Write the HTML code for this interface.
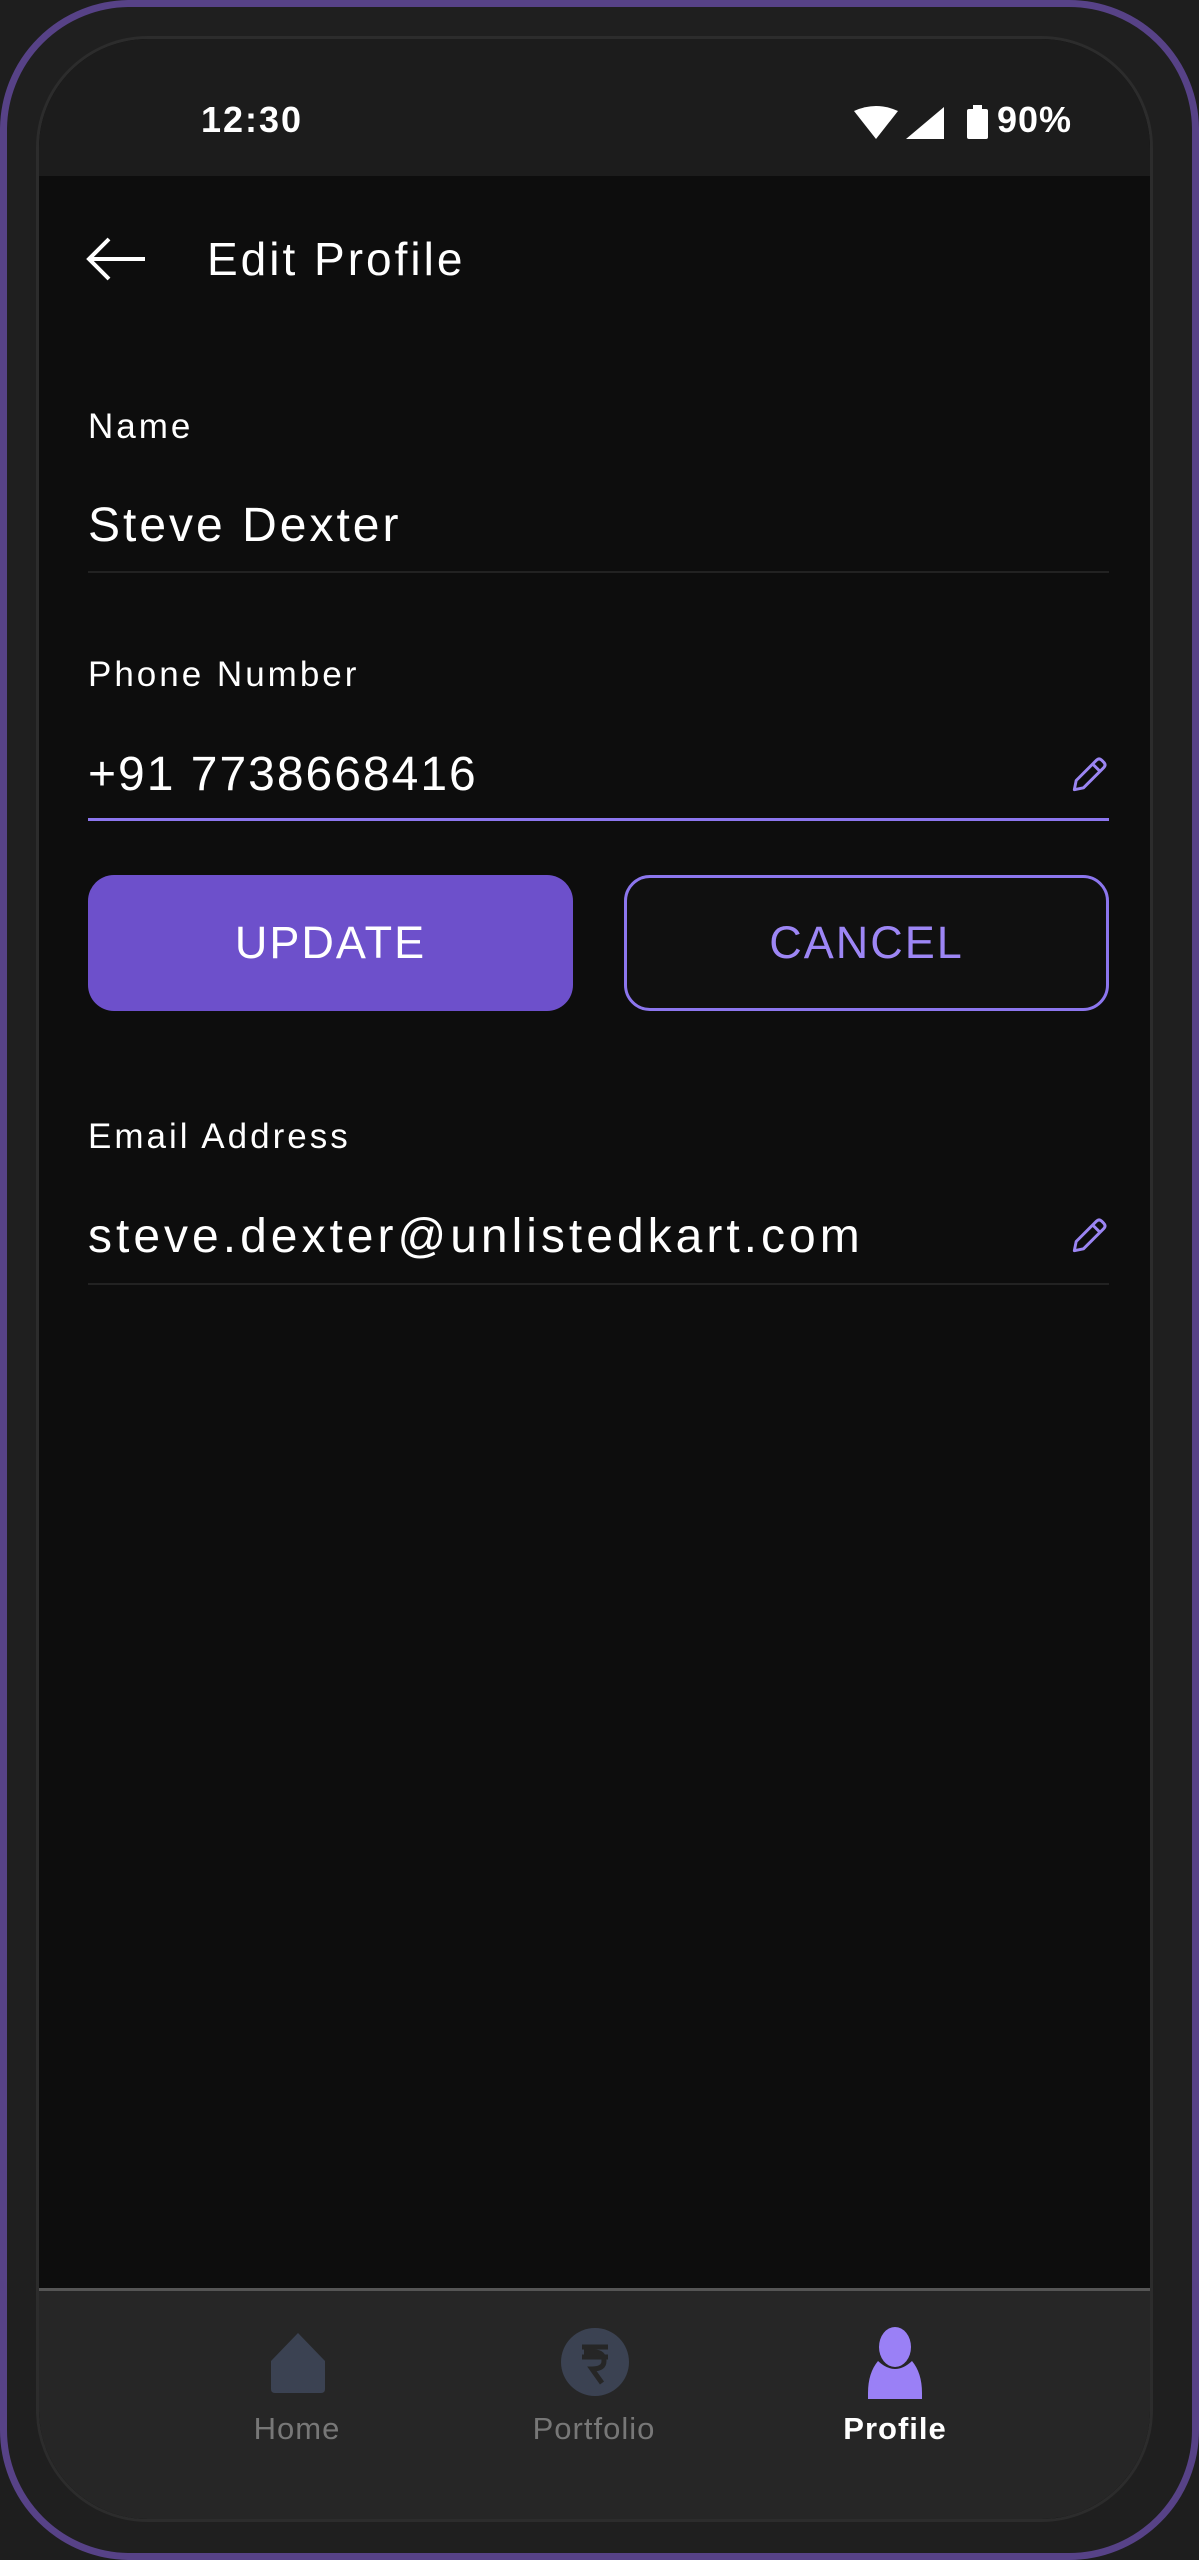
<!DOCTYPE html>
<html><head><meta charset="utf-8"><style>
*{margin:0;padding:0;box-sizing:border-box}
html,body{width:1199px;height:2560px;background:#1e1e1e;overflow:hidden;font-family:"Liberation Sans",sans-serif}
.frame{position:absolute;left:0;top:0;width:1199px;height:2560px;border-radius:130px;background:#1f1f1f;border:7px solid #574287}
.screen{position:absolute;left:36px;top:36px;width:1117px;height:2486px;border-radius:112px;overflow:hidden;background:#0d0d0d;border:3px solid #2c2c2c}
.status{position:absolute;left:0;top:0;width:100%;height:137px;background:#1c1c1c}
.abs{position:absolute;color:#fff;white-space:nowrap}
.line{position:absolute;left:49px;width:1021px;height:2px;background:#222}
.btn{position:absolute;top:836px;height:136px;width:485px;border-radius:26px;display:flex;align-items:center;justify-content:center;font-size:45px;letter-spacing:2px}
.nav{position:absolute;left:0;top:2249px;width:100%;height:240px;background:#262626;border-top:3px solid #555}
.lbl{position:absolute;top:120px;font-size:31px;transform:translateX(-50%);letter-spacing:1px}
.lab{font-size:35px;letter-spacing:3px}
.val{font-size:48px;letter-spacing:3px}
</style></head><body>
<div class="frame"></div>
<div class="screen">
 <div class="status">
  <div class="abs" style="left:162px;top:60px;font-size:36px;font-weight:bold;letter-spacing:2px">12:30</div>
  <svg class="abs" style="left:815px;top:66px" width="140" height="40" viewBox="0 0 140 40">
   <path d="M0 6 Q22 -4 44 6 L22 34 Z" fill="#fff"/>
   <path d="M52 34 L90 2 L90 34 Z" fill="#fff"/>
   <rect x="113" y="4" width="21" height="30" rx="2" fill="#fff"/><rect x="119" y="0" width="9" height="5" fill="#fff"/>
  </svg>
  <div class="abs" style="left:958px;top:60px;font-size:36px;font-weight:bold;letter-spacing:1px">90%</div>
 </div>
 <svg class="abs" style="left:46px;top:196px" width="62" height="48" viewBox="0 0 62 48"><path d="M60 24 H4 M24 4 L4 24 L24 44" stroke="#fff" stroke-width="4" fill="none"/></svg>
 <div class="abs" style="left:168px;top:193px;font-size:46px;letter-spacing:3px">Edit Profile</div>

 <div class="abs lab" style="left:49px;top:368px">Name</div>
 <div class="abs val" style="left:49px;top:459px">Steve Dexter</div>
 <div class="line" style="top:532px"></div>

 <div class="abs lab" style="left:49px;top:616px">Phone Number</div>
 <div class="abs val" style="left:49px;top:708px;letter-spacing:2px">+91 7738668416</div>
 <svg class="abs" style="left:1028px;top:714px" width="44" height="44" viewBox="0 0 24 24"><path d="M4 20 L5 15 L16 4 Q17.5 2.5 19 4 L20 5 Q21.5 6.5 20 8 L9 19 Z M14 6 L18 10" stroke="#9b85f3" stroke-width="1.6" fill="none" stroke-linejoin="round"/></svg>
 <div class="line" style="top:779px;height:3px;background:#8c76ee"></div>

 <div class="btn" style="left:49px;background:#6d50cb;color:#fff">UPDATE</div>
 <div class="btn" style="left:585px;border:3px solid #8c76ee;color:#9d86f5;background:#101010">CANCEL</div>

 <div class="abs lab" style="left:49px;top:1078px">Email Address</div>
 <div class="abs val" style="left:49px;top:1170px;letter-spacing:4px">steve.dexter@unlistedkart.com</div>
 <svg class="abs" style="left:1028px;top:1175px" width="44" height="44" viewBox="0 0 24 24"><path d="M4 20 L5 15 L16 4 Q17.5 2.5 19 4 L20 5 Q21.5 6.5 20 8 L9 19 Z M14 6 L18 10" stroke="#9b85f3" stroke-width="1.6" fill="none" stroke-linejoin="round"/></svg>
 <div class="line" style="top:1244px"></div>

 <div class="nav">
  <svg class="abs" style="left:230px;top:40px" width="58" height="62" viewBox="0 0 58 62"><path d="M29 2 L56 30 V58 Q56 62 52 62 H6 Q2 62 2 58 V30 Z" fill="#3b4252"/></svg>
  <svg class="abs" style="left:521px;top:36px" width="70" height="70" viewBox="0 0 70 70"><circle cx="35" cy="35" r="34" fill="#3b4252"/><path d="M22 20 H48 M22 30 H48 M24 25 H34 Q44 25 44 34 Q44 42 32 42 L42 56" stroke="#262626" stroke-width="5" fill="none"/></svg>
  <svg class="abs" style="left:827px;top:36px" width="58" height="72" viewBox="0 0 58 72"><ellipse cx="29" cy="20" rx="16" ry="20" fill="#9a80f6"/><path d="M12 34 Q29 50 46 34 Q56 46 56 66 V72 H2 V66 Q2 46 12 34 Z" fill="#9a80f6"/></svg>
  <div class="abs lbl" style="left:258px;color:#777">Home</div>
  <div class="abs lbl" style="left:555px;color:#777">Portfolio</div>
  <div class="abs lbl" style="left:856px;font-weight:bold">Profile</div>
 </div>
</div>
</body></html>
